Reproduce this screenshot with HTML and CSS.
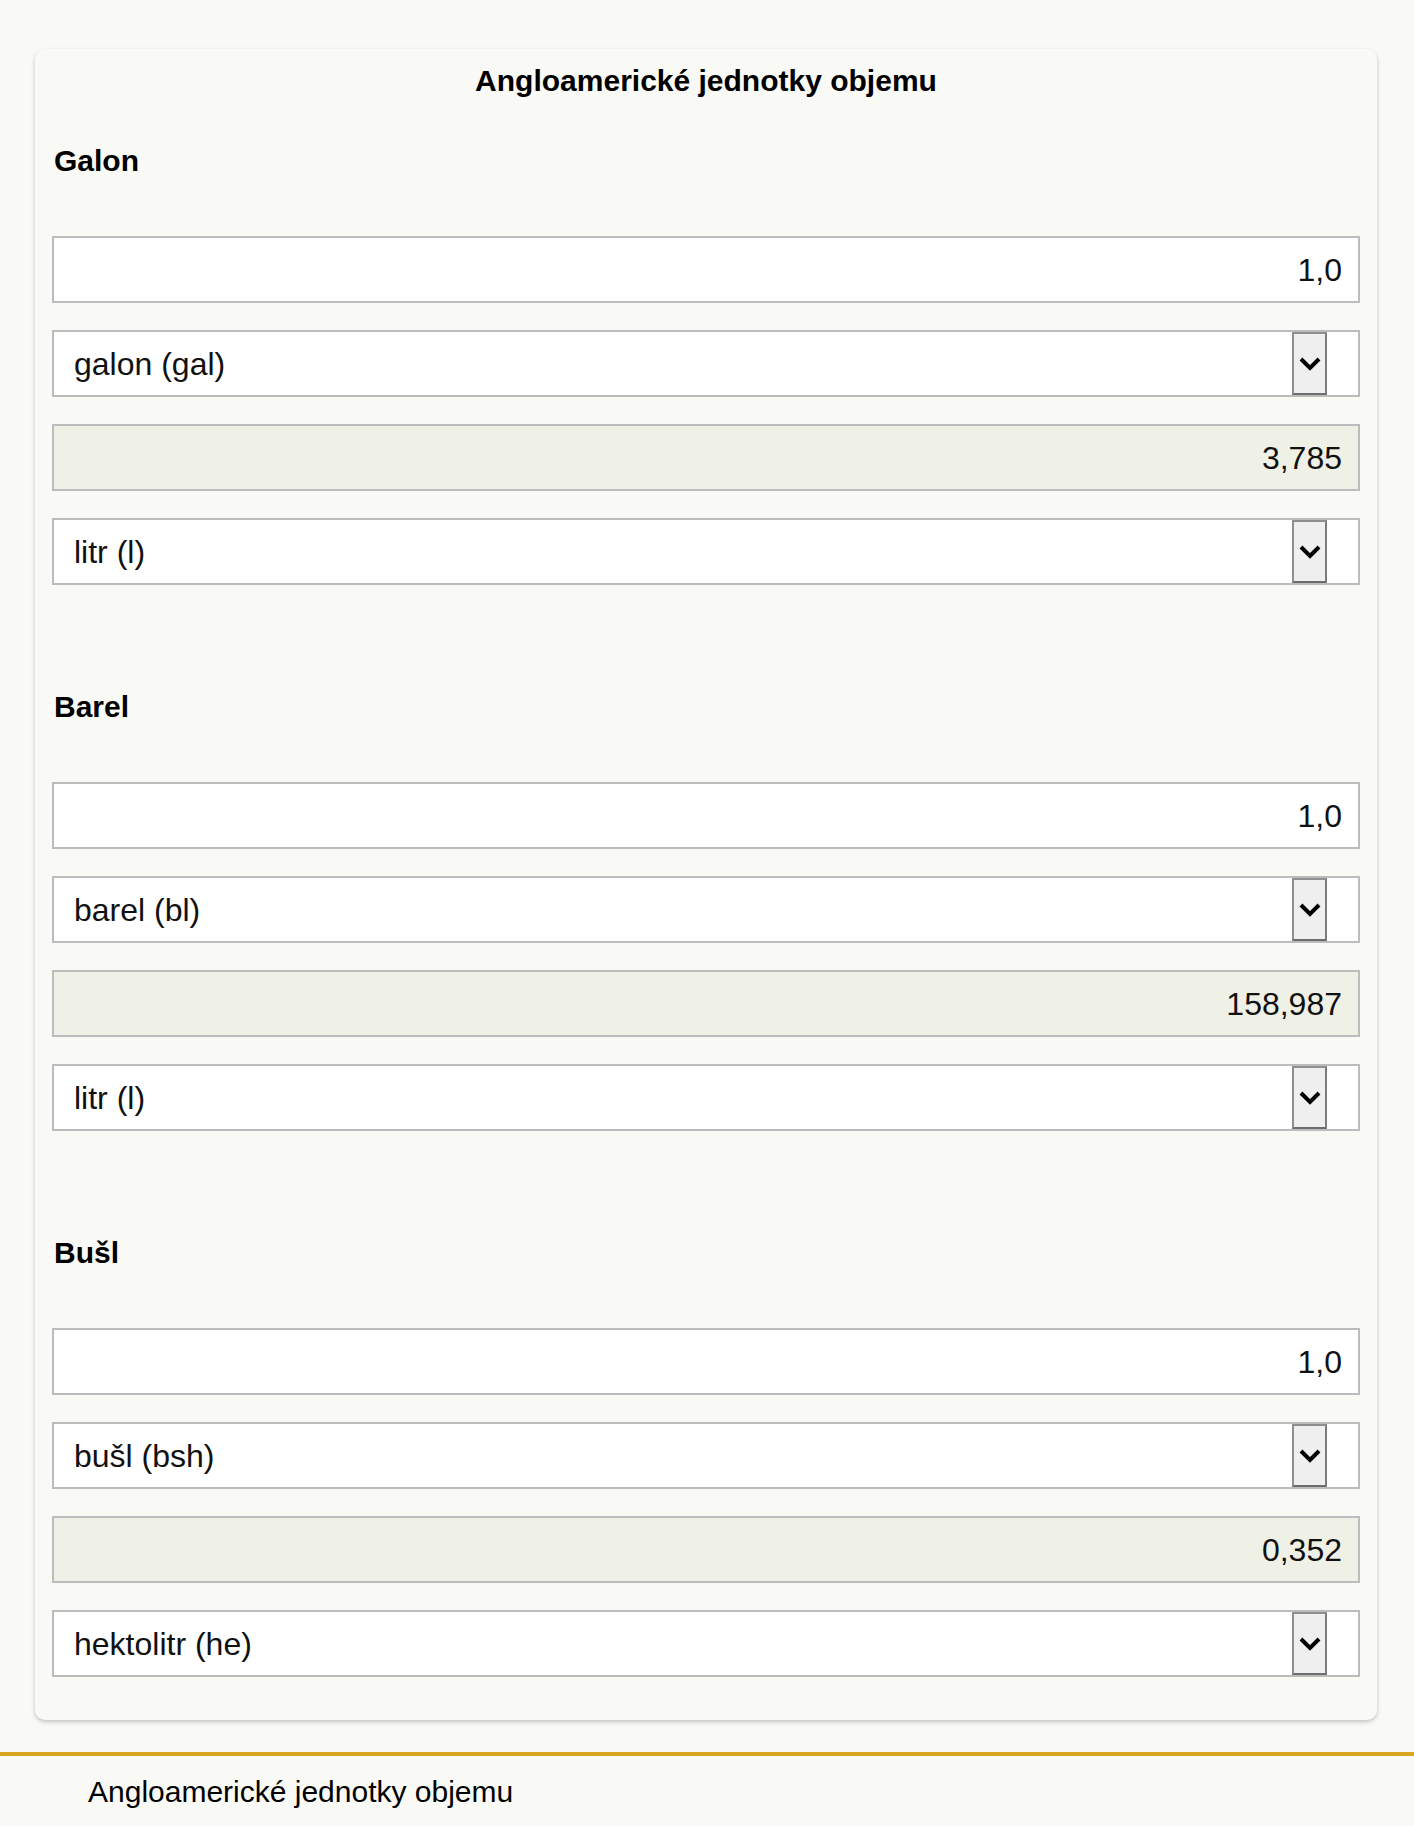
FILE: index.html
```html
<!DOCTYPE html>
<html lang="cs">
<head>
<meta charset="utf-8">
<title>Angloamerické jednotky objemu</title>
<link rel="stylesheet" href="styles.css">
</head>
<body>
<main class="card">
  <h1 class="card-title">Angloamerické jednotky objemu</h1>

  <section class="section">
    <h2 class="section-title">Galon</h2>
    <div class="fields">
      <input class="field field-input" type="text" value="1,0">
      <div class="field field-select"><span class="select-label">galon (gal)</span><span class="select-btn"><svg viewBox="0 0 24 16" width="24" height="16"><polyline points="3,3 12,12 21,3" fill="none" stroke="#000" stroke-width="4"/></svg></span></div>
      <input class="field field-input field-result" type="text" value="3,785" readonly>
      <div class="field field-select"><span class="select-label">litr (l)</span><span class="select-btn"><svg viewBox="0 0 24 16" width="24" height="16"><polyline points="3,3 12,12 21,3" fill="none" stroke="#000" stroke-width="4"/></svg></span></div>
    </div>
  </section>

  <section class="section">
    <h2 class="section-title">Barel</h2>
    <div class="fields">
      <input class="field field-input" type="text" value="1,0">
      <div class="field field-select"><span class="select-label">barel (bl)</span><span class="select-btn"><svg viewBox="0 0 24 16" width="24" height="16"><polyline points="3,3 12,12 21,3" fill="none" stroke="#000" stroke-width="4"/></svg></span></div>
      <input class="field field-input field-result" type="text" value="158,987" readonly>
      <div class="field field-select"><span class="select-label">litr (l)</span><span class="select-btn"><svg viewBox="0 0 24 16" width="24" height="16"><polyline points="3,3 12,12 21,3" fill="none" stroke="#000" stroke-width="4"/></svg></span></div>
    </div>
  </section>

  <section class="section">
    <h2 class="section-title">Bušl</h2>
    <div class="fields">
      <input class="field field-input" type="text" value="1,0">
      <div class="field field-select"><span class="select-label">bušl (bsh)</span><span class="select-btn"><svg viewBox="0 0 24 16" width="24" height="16"><polyline points="3,3 12,12 21,3" fill="none" stroke="#000" stroke-width="4"/></svg></span></div>
      <input class="field field-input field-result" type="text" value="0,352" readonly>
      <div class="field field-select"><span class="select-label">hektolitr (he)</span><span class="select-btn"><svg viewBox="0 0 24 16" width="24" height="16"><polyline points="3,3 12,12 21,3" fill="none" stroke="#000" stroke-width="4"/></svg></span></div>
    </div>
  </section>
</main>

<footer class="footer">
  <p class="footer-text">Angloamerické jednotky objemu</p>
</footer>
</body>
</html>
```

FILE: styles.css
```css
html, body {
  margin: 0;
  padding: 0;
}

body {
  background: #f9f9f5;
  font-family: "Liberation Sans", Arial, sans-serif;
  color: #000;
}

.card {
  margin: 49px 37px 32px 35px;
  padding: 15px 17px 43px 17px;
  border-radius: 10px;
  background: #f9f9f5;
  box-shadow: 0 2px 4px rgba(0, 0, 0, 0.22);
}

.card-title {
  margin: 0;
  font-size: 30px;
  line-height: 34px;
  font-weight: bold;
  text-align: center;
}

.section-title {
  margin: 46px 0 58px 2px;
  font-size: 30px;
  line-height: 34px;
  font-weight: bold;
}

.section + .section .section-title {
  margin-top: 105px;
}

.fields {
  display: flex;
  flex-direction: column;
  gap: 27px;
}

.field {
  box-sizing: border-box;
  height: 67px;
  width: 100%;
  margin: 0;
  border: 2px solid #bcbcbc;
  background: #fff;
  font-family: "Liberation Sans", Arial, sans-serif;
  font-size: 32px;
  color: #111;
}

.field-input {
  display: block;
  padding: 2px 16px 0 20px;
  text-align: right;
  outline: none;
}

.field-result {
  background: #f0f1e6;
}

.field-select {
  display: flex;
  align-items: stretch;
  padding: 0 31px 0 20px;
}

.select-label {
  flex: 1;
  display: flex;
  align-items: center;
  padding-top: 2px;
}

.select-btn {
  box-sizing: border-box;
  flex: 0 0 35px;
  width: 35px;
  display: flex;
  align-items: center;
  justify-content: center;
  background: #efefef;
  border: 2px solid #8f8f8f;
  border-right-color: #7c7c7c;
  border-bottom-color: #6c6c6c;
}

.select-btn svg {
  flex: none;
  display: block;
}

.footer {
  border-top: 4px solid #daa520;
  padding: 19px 0 12px 88px;
}

.footer-text {
  margin: 0;
  font-size: 30px;
  line-height: 34px;
}
```
